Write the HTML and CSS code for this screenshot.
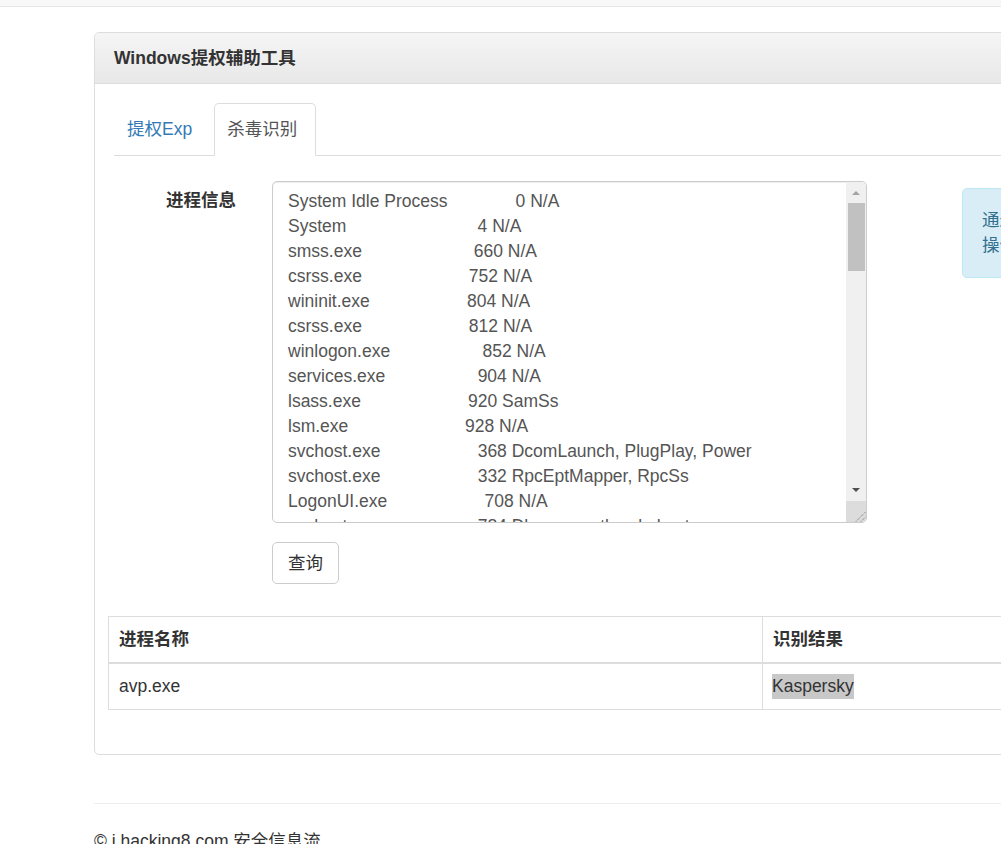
FILE: index.html
```html
<!DOCTYPE html>
<html lang="zh-CN">
<head>
    <meta charset="UTF-8">
    <meta name="viewport" content="width=device-width, initial-scale=1.0">
    <title>Windows提权辅助工具</title>
    <link rel="stylesheet" href="styles.css">
</head>
<body>
    <div class="navbar"></div>

    <div class="panel">
        <div class="panel-heading">
            <h3 class="panel-title">Windows提权辅助工具</h3>
        </div>
        <div class="panel-body">
            <ul class="tabs">
                <li><a href="#exp">提权Exp</a></li>
                <li class="active"><a href="#av">杀毒识别</a></li>
            </ul>

            <!-- 杀毒识别 -->
            <div class="tab-pane">
                <div class="form-row">
                    <label class="form-label">进程信息</label>
                    <div class="proc-box">
<pre class="proc-text">System Idle Process              0 N/A
System                           4 N/A
smss.exe                       660 N/A
csrss.exe                      752 N/A
wininit.exe                    804 N/A
csrss.exe                      812 N/A
winlogon.exe                   852 N/A
services.exe                   904 N/A
lsass.exe                      920 SamSs
lsm.exe                        928 N/A
svchost.exe                    368 DcomLaunch, PlugPlay, Power
svchost.exe                    332 RpcEptMapper, RpcSs
LogonUI.exe                    708 N/A
svchost.exe                    784 Dhcp, eventlog, lmhosts</pre>
                        <div class="scrollbar">
                            <div class="sb-up"><span class="arrow-up"></span></div>
                            <div class="sb-thumb"></div>
                            <div class="sb-track"></div>
                            <div class="sb-down"><span class="arrow-down"></span></div>
                            <div class="sb-corner">
                                <svg width="20" height="21" viewBox="0 0 20 21">
                                    <line x1="10" y1="20.5" x2="19.5" y2="11" stroke="#6a6a6a" stroke-width="1" stroke-dasharray="1 1"/>
                                    <line x1="15" y1="20.5" x2="19.5" y2="16" stroke="#6a6a6a" stroke-width="1" stroke-dasharray="1 1"/>
                                </svg>
                            </div>
                        </div>
                    </div>
                    <div class="alert-info">
                        <p>通过tasklist /svc命令获取进程</p>
                        <p>操作完成后粘贴到左侧文本框</p>
                    </div>
                </div>
                <div class="form-actions">
                    <button class="btn" type="button">查询</button>
                </div>

                <table class="result-table">
                    <thead>
                        <tr>
                            <th class="col-name">进程名称</th>
                            <th>识别结果</th>
                        </tr>
                    </thead>
                    <tbody>
                        <tr>
                            <td>avp.exe</td>
                            <td><span class="hit">Kaspersky</span></td>
                        </tr>
                    </tbody>
                </table>
            </div>
        </div>
    </div>

    <footer class="footer">
        <hr>
        <p>© i.hacking8.com 安全信息流</p>
    </footer>
</body>
</html>
```

FILE: styles.css
```css
* {
    box-sizing: border-box;
}
html, body {
    overflow: hidden;
}
body {
    margin: 0;
    font-family: "Liberation Sans", "Noto Sans CJK SC", sans-serif;
    font-size: 17.5px;
    line-height: 25px;
    color: #333;
    background: #fff;
}
.navbar {
    height: 7px;
    background-color: #f8f8f8;
    border-bottom: 1px solid #e7e7e7;
}

/* panel */
.panel {
    width: 960px;
    margin: 25px 0 0 94px;
    border: 1px solid #ddd;
    border-radius: 5px;
}
.panel-heading {
    padding: 12.5px 19px;
    background-image: linear-gradient(to bottom, #f5f5f5 0%, #e8e8e8 100%);
    border-bottom: 1px solid #ddd;
    border-radius: 5px 5px 0 0;
}
.panel-title {
    margin: 0;
    font-size: 17.5px;
    line-height: 25px;
    font-weight: bold;
    color: #333;
}
.panel-body {
    padding: 19px 19px 19px 19px;
}

/* tabs */
.tabs {
    display: flex;
    margin: 0;
    padding: 0;
    list-style: none;
    border-bottom: 1px solid #ddd;
}
.tabs li {
    margin-right: 3px;
    margin-bottom: -1px;
}
.tabs a {
    display: block;
    padding: 13px 18px 13px 12px;
    line-height: 25px;
    color: #337ab7;
    text-decoration: none;
    border: 1px solid transparent;
    border-radius: 5px 5px 0 0;
}
.tabs .active a {
    color: #555;
    background-color: #fff;
    border-color: #ddd #ddd transparent;
}

/* form */
.form-row {
    display: flex;
    align-items: flex-start;
    margin-top: 25px;
}
.form-label {
    flex: none;
    width: 122px;
    margin-right: 36px;
    padding-top: 7px;
    text-align: right;
    font-weight: bold;
    white-space: nowrap;
}
.proc-box {
    display: flex;
    flex: none;
    width: 595px;
    height: 342px;
    border: 1px solid #ccc;
    border-radius: 5px;
    overflow: hidden;
    box-shadow: inset 0 1px 1px rgba(0, 0, 0, .075);
}
.proc-text {
    flex: 1;
    margin: 0;
    padding: 6.5px 15px;
    overflow: hidden;
    white-space: pre;
    font-family: "Liberation Sans", sans-serif;
    font-size: 17.5px;
    line-height: 25px;
    color: #555;
}
.scrollbar {
    display: flex;
    flex-direction: column;
    width: 20px;
    background-color: #f0f0f0;
}
.sb-up {
    display: flex;
    align-items: center;
    justify-content: center;
    height: 21px;
}
.arrow-up {
    border-left: 4px solid transparent;
    border-right: 4px solid transparent;
    border-bottom: 4px solid #a3a3a3;
}
.sb-thumb {
    height: 68px;
    margin: 0 1px 0 2px;
    background-color: #c1c1c1;
}
.sb-track {
    flex: 1;
}
.sb-down {
    display: flex;
    align-items: center;
    justify-content: center;
    height: 22px;
}
.arrow-down {
    border-left: 4px solid transparent;
    border-right: 4px solid transparent;
    border-top: 4px solid #505050;
}
.sb-corner {
    height: 21px;
    background-color: #dcdcdc;
}
.sb-corner svg {
    display: block;
}
.alert-info {
    flex: none;
    width: 280px;
    margin: 7px 0 0 95px;
    padding: 19px;
    color: #31708f;
    background-color: #d9edf7;
    border: 1px solid #bce8f1;
    border-radius: 5px;
}
.alert-info p {
    margin: 0;
    white-space: nowrap;
}
.form-actions {
    margin: 19px 0 0 158px;
}
.btn {
    padding: 7.5px 15px;
    font-family: "Liberation Sans", "Noto Sans CJK SC", sans-serif;
    font-size: 17.5px;
    line-height: 25px;
    color: #333;
    background-color: #fff;
    border: 1px solid #ccc;
    border-radius: 5px;
}

/* table */
.result-table {
    width: 1000px;
    margin: 32px 0 25px -6px;
    border-collapse: collapse;
    table-layout: fixed;
    border: 1px solid #ddd;
}
.result-table th,
.result-table td {
    padding: 10px;
    line-height: 25px;
    text-align: left;
    vertical-align: top;
    border: 1px solid #ddd;
}
.result-table th {
    font-weight: bold;
    border-bottom: 2px solid #ddd;
}
.result-table .col-name {
    width: 654px;
}
.hit {
    display: inline-block;
    margin-left: -1px;
    background-color: #c8c8c8;
}

/* footer */
.footer {
    margin-left: 94px;
}
.footer hr {
    margin: 48px 0 25px 0;
    border: 0;
    border-top: 1px solid #eee;
}
.footer p {
    margin: 0;
}
```
